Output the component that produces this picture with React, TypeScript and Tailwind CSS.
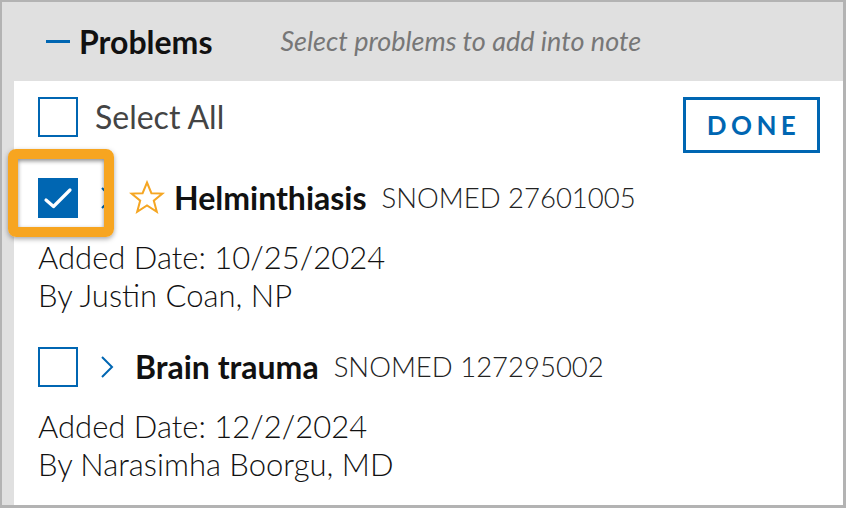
import React from "react";

const blue = "#0066b2";

function Checkbox({ checked }: { checked?: boolean }) {
    return checked ? (
        <div className="w-[40px] h-[40px] bg-[#0066b2] flex items-center justify-center shrink-0">
            <svg width="40" height="40" viewBox="0 0 40 40">
                <polyline points="8,22 15.5,28.5 32,12" fill="none" stroke="#fff" strokeWidth="3.2" strokeLinecap="round" strokeLinejoin="round" />
            </svg>
        </div>
    ) : (
        <div className="w-[40px] h-[40px] border-2 border-[#0066b2] bg-white shrink-0" />
    );
}

function Chevron() {
    return (
        <svg width="14" height="24" viewBox="0 0 14 24" className="shrink-0">
            <polyline points="2,2 12,12 2,22" fill="none" stroke={blue} strokeWidth="2" />
        </svg>
    );
}

function Star() {
    return (
        <svg width="36" height="36" viewBox="0 0 36 36" className="shrink-0">
            <polygon
                points="18,2.5 22.4,13.2 33.5,13.6 24.8,20.6 27.8,31.8 18,25.4 8.2,31.8 11.2,20.6 2.5,13.6 13.6,13.2"
                fill="none"
                stroke="#f5a623"
                strokeWidth="2"
                strokeLinejoin="miter"
            />
        </svg>
    );
}

const problems = [
    { name: "Helminthiasis", code: "SNOMED 27601005", date: "10/25/2024", by: "Justin Coan, NP", checked: true, starred: true },
    { name: "Brain trauma", code: "SNOMED 127295002", date: "12/2/2024", by: "Narasimha Boorgu, MD", checked: false, starred: false },
];

export default function App() {
    return (
        <div className="w-[846px] h-[508px] overflow-hidden bg-[#e0e0e0] border-t-2 border-l-2 border-r-[3px] border-b-[3px] border-[#b3b3b3] flex flex-col" style={{ fontFamily: "Lato, 'Open Sans', sans-serif" }}>
            {/* Header */}
            <div className="h-[79px] shrink-0 flex items-center pl-[44px]">
                <div className="w-[24px] h-[3px] bg-[#0066b2] mr-[9px]" />
                <span className="text-[32px] font-bold text-[#111]">Problems</span>
                <span className="ml-[68px] text-[27px] italic text-[#777]">Select problems to add into note</span>
            </div>

            {/* Body */}
            <div className="flex-1 bg-white ml-[12px] pl-[24px] pr-[23px] pt-[16px] text-[#111]">
                <div className="flex justify-between items-start">
                    <div className="flex items-center h-[40px]">
                        <Checkbox />
                        <span className="ml-[17px] text-[32px] text-[#444]">Select All</span>
                    </div>
                    <button className="h-[56px] w-[137px] border-[3px] border-[#0066b2] text-[#0066b2] text-[26px] font-bold tracking-[0.17em] pl-[4px]">
                        DONE
                    </button>
                </div>

                {problems.map((p, i) => (
                    <div key={i} className={i === 0 ? "mt-[25px] relative" : "mt-[33px] relative"}>
                        <div className="flex items-center h-[40px]">
                            <Checkbox checked={p.checked} />
                            <div className="ml-[22px]">
                                <Chevron />
                            </div>
                            {p.starred ? (
                                <div className="ml-[15px] mr-[9px]">
                                    <Star />
                                </div>
                            ) : (
                                <div className="w-[21px]" />
                            )}
                            <span className="text-[32px] font-bold">{p.name}</span>
                            <span className="ml-[15px] text-[27.5px] font-light text-[#222]">{p.code}</span>
                        </div>
                        <div className="mt-[20px] text-[31px] leading-[38px] font-light">
                            <div>Added Date: {p.date}</div>
                            <div>By {p.by}</div>
                        </div>
                        {p.checked && (
                            <div className="absolute left-[-30px] top-[-29px] w-[106px] h-[88px] rounded-[8px] border-[10px] border-[#f7a520] shadow-[0_2px_5px_rgba(0,0,0,0.35),inset_0_2px_4px_rgba(0,0,0,0.45)] pointer-events-none" />
                        )}
                    </div>
                ))}
            </div>
        </div>
    );
}
